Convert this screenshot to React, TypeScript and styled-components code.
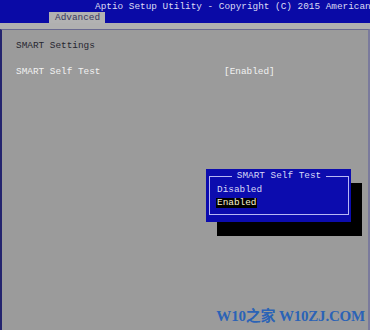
import styled, { createGlobalStyle } from "styled-components";

const GlobalStyle = createGlobalStyle`
    html, body {
        margin: 0;
        padding: 0;
        background: #9b9b9b;
    }
    * {
        box-sizing: border-box;
    }
`;

const mono = `"Liberation Mono", "DejaVu Sans Mono", monospace`;

type ItemProps = {
    $tone?: "dark" | "light";
};

type OptionProps = {
    $selected?: boolean;
};

const options = ["Disabled", "Enabled"];

export default function App() {
    return (
        <>
            <GlobalStyle />
            <Screen>
                <Header>
                    <Title>Aptio Setup Utility - Copyright (C) 2015 American</Title>
                    <Tab>Advanced</Tab>
                </Header>
                <Strip />
                <Panel>
                    <Row>
                        <Label $tone="dark">SMART Settings</Label>
                    </Row>
                    <Row />
                    <Row>
                        <Label $tone="light">SMART Self Test</Label>
                        <Value>[Enabled]</Value>
                    </Row>
                </Panel>
                <Popup>
                    <Frame>
                        <PopupTitle>SMART Self Test</PopupTitle>
                        {options.map((o) => (
                            <Option key={o} $selected={o === "Enabled"}>
                                {o}
                            </Option>
                        ))}
                    </Frame>
                </Popup>
                <Watermark>W10之家 W10ZJ.COM</Watermark>
            </Screen>
        </>
    );
}

const Screen = styled.div`
    position: relative;
    width: 370px;
    height: 330px;
    display: flex;
    flex-direction: column;
    background: #9b9b9b;
    font-family: ${mono};
    font-size: 9.4px;
    overflow: hidden;
`;

const Header = styled.div`
    height: 23px;
    background: #0a0aa6;
    display: flex;
    flex-direction: column;
    padding-top: 1px;
`;

const Title = styled.div`
    padding-left: 95px;
    line-height: 11px;
    color: #dcdcf4;
    white-space: nowrap;
`;

const Tab = styled.div`
    margin-left: 49px;
    margin-top: auto;
    width: 56px;
    height: 12px;
    line-height: 12px;
    padding-left: 6px;
    background: #b2b2b2;
    color: #35355e;
`;

const Strip = styled.div`
    height: 6px;
    background: #b0b0b0;
`;

const Panel = styled.div`
    flex: 1;
    background: #9b9b9b;
    border-top: 1px solid #6a6a90;
    border-left: 2px solid #24246e;
    border-right: 2px solid #7a7a9c;
    padding: 9px 0 0 14px;
    display: flex;
    flex-direction: column;
`;

const Row = styled.div`
    height: 13px;
    line-height: 13px;
    display: flex;
    white-space: nowrap;
`;

const Label = styled.span<ItemProps>`
    width: 208px;
    color: ${(p) => (p.$tone === "light" ? "#f2f2f2" : "#262630")};
`;

const Value = styled.span`
    color: #f2f2f2;
`;

const Popup = styled.div`
    position: absolute;
    left: 206px;
    top: 169px;
    width: 145px;
    height: 53px;
    background: #0c0cae;
    box-shadow: 11px 14px 0 #000;
    padding: 7px 2px 7px 3px;
`;

const Frame = styled.div`
    position: relative;
    height: 100%;
    border: 1px solid #b8b8f4;
    padding: 6px 0 0 7px;
    display: flex;
    flex-direction: column;
    align-items: flex-start;
`;

const PopupTitle = styled.div`
    position: absolute;
    top: -7px;
    left: 0;
    right: 0;
    margin: 0 auto;
    width: max-content;
    padding: 0 5px;
    line-height: 12px;
    background: #0c0cae;
    color: #d8d8f8;
`;

const Option = styled.div<OptionProps>`
    height: 10px;
    line-height: 10px;
    padding: 0 1px;
    margin-left: -1px;
    margin-top: 2px;
    margin-bottom: 1px;
    color: ${(p) => (p.$selected ? "#fcf6d0" : "#d8d8f8")};
    background: ${(p) => (p.$selected ? "#000" : "transparent")};
`;

const Watermark = styled.div`
    position: absolute;
    right: 5px;
    bottom: 5px;
    font-family: "Liberation Serif", "Noto Sans CJK SC", serif;
    font-weight: bold;
    font-size: 15px;
    letter-spacing: -0.2px;
    color: #2b63b6;
    white-space: nowrap;
`;
